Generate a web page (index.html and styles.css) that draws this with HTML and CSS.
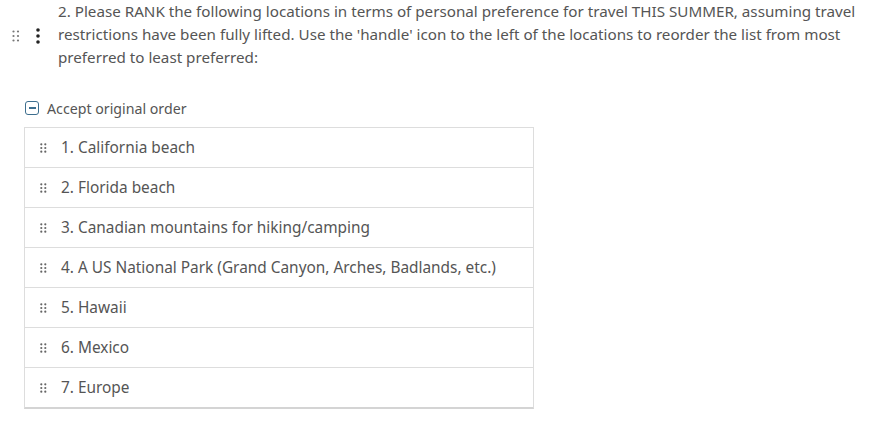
FILE: index.html
```html
<!DOCTYPE html>
<html>
<head>
<meta charset="utf-8">
<link rel="stylesheet" href="styles.css">
</head>
<body>
<div class="question">
  <div class="q-head">
    <div class="q-tools">
      <svg class="grip" width="8" height="12" viewBox="0 0 8 12"><g fill="#777"><circle cx="1.5" cy="1.5" r="1.1"/><circle cx="6" cy="1.5" r="1.1"/><circle cx="1.5" cy="6" r="1.1"/><circle cx="6" cy="6" r="1.1"/><circle cx="1.5" cy="10.5" r="1.1"/><circle cx="6" cy="10.5" r="1.1"/></g></svg>
      <svg class="kebab" width="4" height="16" viewBox="0 0 4 16"><g fill="#222"><circle cx="2" cy="2" r="1.8"/><circle cx="2" cy="8" r="1.8"/><circle cx="2" cy="14" r="1.8"/></g></svg>
    </div>
    <p class="q-text">2. Please RANK the following locations in terms of personal preference for travel THIS SUMMER, assuming travel restrictions have been fully lifted. Use the 'handle' icon to the left of the locations to reorder the list from most preferred to least preferred:</p>
  </div>
  <label class="accept">
    <span class="box"><span class="dash"></span></span>
    <span>Accept original order</span>
  </label>
  <ul class="rank-list">
    <li><svg class="handle" width="7" height="10" viewBox="0 0 7 10"><g fill="#666"><circle cx="1.3" cy="1.3" r="1.1"/><circle cx="5.3" cy="1.3" r="1.1"/><circle cx="1.3" cy="5" r="1.1"/><circle cx="5.3" cy="5" r="1.1"/><circle cx="1.3" cy="8.7" r="1.1"/><circle cx="5.3" cy="8.7" r="1.1"/></g></svg>1. California beach</li>
    <li><svg class="handle" width="7" height="10" viewBox="0 0 7 10"><g fill="#666"><circle cx="1.3" cy="1.3" r="1.1"/><circle cx="5.3" cy="1.3" r="1.1"/><circle cx="1.3" cy="5" r="1.1"/><circle cx="5.3" cy="5" r="1.1"/><circle cx="1.3" cy="8.7" r="1.1"/><circle cx="5.3" cy="8.7" r="1.1"/></g></svg>2. Florida beach</li>
    <li><svg class="handle" width="7" height="10" viewBox="0 0 7 10"><g fill="#666"><circle cx="1.3" cy="1.3" r="1.1"/><circle cx="5.3" cy="1.3" r="1.1"/><circle cx="1.3" cy="5" r="1.1"/><circle cx="5.3" cy="5" r="1.1"/><circle cx="1.3" cy="8.7" r="1.1"/><circle cx="5.3" cy="8.7" r="1.1"/></g></svg>3. Canadian mountains for hiking/camping</li>
    <li><svg class="handle" width="7" height="10" viewBox="0 0 7 10"><g fill="#666"><circle cx="1.3" cy="1.3" r="1.1"/><circle cx="5.3" cy="1.3" r="1.1"/><circle cx="1.3" cy="5" r="1.1"/><circle cx="5.3" cy="5" r="1.1"/><circle cx="1.3" cy="8.7" r="1.1"/><circle cx="5.3" cy="8.7" r="1.1"/></g></svg>4. A US National Park (Grand Canyon, Arches, Badlands, etc.)</li>
    <li><svg class="handle" width="7" height="10" viewBox="0 0 7 10"><g fill="#666"><circle cx="1.3" cy="1.3" r="1.1"/><circle cx="5.3" cy="1.3" r="1.1"/><circle cx="1.3" cy="5" r="1.1"/><circle cx="5.3" cy="5" r="1.1"/><circle cx="1.3" cy="8.7" r="1.1"/><circle cx="5.3" cy="8.7" r="1.1"/></g></svg>5. Hawaii</li>
    <li><svg class="handle" width="7" height="10" viewBox="0 0 7 10"><g fill="#666"><circle cx="1.3" cy="1.3" r="1.1"/><circle cx="5.3" cy="1.3" r="1.1"/><circle cx="1.3" cy="5" r="1.1"/><circle cx="5.3" cy="5" r="1.1"/><circle cx="1.3" cy="8.7" r="1.1"/><circle cx="5.3" cy="8.7" r="1.1"/></g></svg>6. Mexico</li>
    <li><svg class="handle" width="7" height="10" viewBox="0 0 7 10"><g fill="#666"><circle cx="1.3" cy="1.3" r="1.1"/><circle cx="5.3" cy="1.3" r="1.1"/><circle cx="1.3" cy="5" r="1.1"/><circle cx="5.3" cy="5" r="1.1"/><circle cx="1.3" cy="8.7" r="1.1"/><circle cx="5.3" cy="8.7" r="1.1"/></g></svg>7. Europe</li>
  </ul>
</div>
</body>
</html>
```
FILE: styles.css
```css
html, body {
  margin: 0;
  padding: 0;
  background: #fff;
}
body {
  font-family: "Noto Sans", "Liberation Sans", sans-serif;
  color: #555;
  font-size: 15.2px;
}
.question {
  padding: 0 0 0 12px;
}
.q-head {
  display: flex;
  align-items: flex-start;
}
.q-tools {
  width: 46px;
  flex: none;
  display: flex;
  align-items: center;
  gap: 16px;
  padding-top: 28px;
}
.grip { display: block; }
.kebab { display: block; }
.q-text {
  margin: 0;
  line-height: 23px;
  width: 812px;
}
.accept {
  display: flex;
  align-items: center;
  gap: 8px;
  margin: 29px 0 0 13px;
  font-size: 14.2px;
  height: 20px;
}
.box {
  width: 12px;
  height: 12px;
  border: 1.5px solid #3d6e8e;
  border-radius: 3px;
  display: flex;
  align-items: center;
  justify-content: center;
}
.dash {
  width: 7px;
  height: 1.5px;
  background: #3d6e8e;
}
.rank-list {
  list-style: none;
  margin: 9px 0 0 12px;
  padding: 0;
  width: 508px;
  border: 1px solid #ddd;
  border-bottom: 2px solid #d4d4d4;
  font-size: 15.4px;
}
.rank-list li {
  height: 39px;
  display: flex;
  align-items: center;
  border-top: 1px solid #ddd;
  padding-left: 15px;
}
.rank-list li:first-child { border-top: none; }
.handle {
  flex: none;
  margin-right: 14px;
}
```
